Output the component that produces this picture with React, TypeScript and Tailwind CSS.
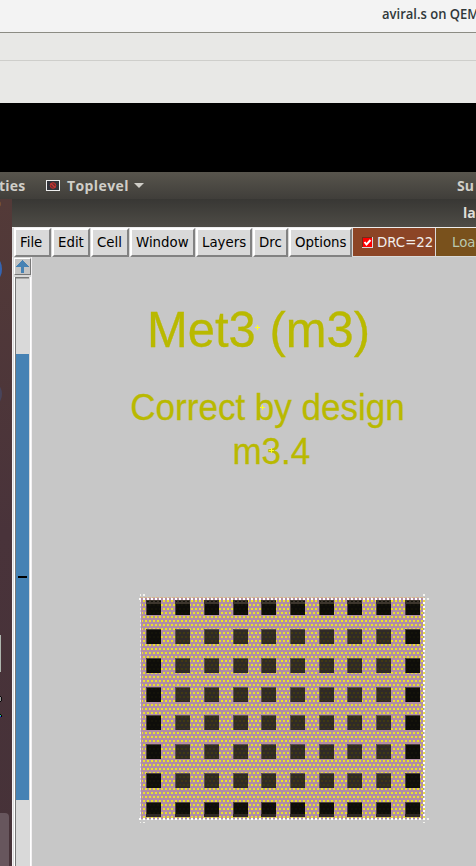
import React from "react";

const COLS = [146, 175, 204, 233, 261, 290, 319, 347, 376, 405];
const ROWS = [600, 629, 658, 687, 715, 744, 773, 802];

function Via({ x, y, edge, first, last }: { x: number; y: number; edge: boolean; first: boolean; last: boolean }) {
  return (
    <g>
      <rect x={x} y={y} width={15} height={15} fill={edge ? "#4d423f" : "#5e5250"} />
      <rect x={x + 1} y={y + 1} width={14} height={14} fill={edge ? "#0e0d0a" : "#302a27"} />
      {first && <rect x={x} y={y} width={15} height={4} fill="#3c352d" />}
      {last && <rect x={x} y={y + 12} width={15} height={3} fill="#2f2925" />}
      <rect x={x + 1} y={y + 1} width={14} height={13} fill={edge ? "url(#dimDots)" : "url(#midDots)"} />
    </g>
  );
}

function Layout() {
  return (
    <svg className="block" width="444" height="609" viewBox="32 257 444 609" shapeRendering="crispEdges">
      <defs>
        <pattern id="dots" width="4" height="8" patternUnits="userSpaceOnUse">
          <rect x="1" y="4" width="2" height="2" fill="#e9e22c" />
          <rect x="3" y="0" width="1" height="2" fill="#e9e22c" />
          <rect x="0" y="0" width="1" height="2" fill="#e9e22c" />
        </pattern>
        <pattern id="midDots" width="4" height="8" patternUnits="userSpaceOnUse">
          <rect x="1" y="4" width="2" height="2" fill="#403b12" />
          <rect x="3" y="0" width="1" height="2" fill="#403b12" />
          <rect x="0" y="0" width="1" height="2" fill="#403b12" />
        </pattern>
        <pattern id="dimDots" width="4" height="8" patternUnits="userSpaceOnUse">
          <rect x="1" y="4" width="2" height="2" fill="#14130a" />
          <rect x="3" y="0" width="1" height="2" fill="#14130a" />
          <rect x="0" y="0" width="1" height="2" fill="#14130a" />
        </pattern>
      </defs>
      <g fill="#b9b900" stroke="#b9b900" strokeWidth="0.3" fontFamily="'Liberation Sans', Arial, sans-serif">
        <text x="147" y="346.5" fontSize="50.5" textLength="223" lengthAdjust="spacingAndGlyphs">Met3 (m3)</text>
        <text x="130.3" y="420.3" fontSize="36.5" textLength="274.5" lengthAdjust="spacingAndGlyphs">Correct by design</text>
        <text x="232.4" y="464.3" fontSize="36.3" textLength="78" lengthAdjust="spacingAndGlyphs">m3.4</text>
      </g>
      <g stroke="#ffff20" strokeWidth="1">
        <path d="M255 327.5h5M257.5 325v5M260 407.5h5M262.5 405v5M269 450.5h5M271.5 448v5" />
      </g>
      <rect x="141" y="598" width="283" height="221" fill="#b18da5" />
      <rect x="142" y="600" width="282" height="218" fill="url(#dots)" />
      {ROWS.map((y, r) =>
        COLS.map((x, c) => (
          <Via
            key={`${r}-${c}`}
            x={x}
            y={y}
            edge={r === 0 || r === 7 || c === 0 || c === 9}
            first={r === 0}
            last={r === 7}
          />
        )),
      )}
      <g strokeWidth="1">
        <path d="M140 597.5H425" stroke="#d7b58d" strokeDasharray="3 1" />
        <path d="M139 599H424" stroke="#ffffff" strokeWidth="2" strokeDasharray="2 2" />
        <path d="M140.5 600V818" stroke="#eee5e5" strokeDasharray="2 2" />
        <path d="M139 819H425" stroke="#ffffff" strokeWidth="2" strokeDasharray="2 2" />
        <path d="M424 598V819" stroke="#ffffff" strokeWidth="2" strokeDasharray="2 2" />
        <path d="M424 600V819" stroke="#e9db45" strokeWidth="2" strokeDasharray="2 6" />
        <path d="M140 595h1M143 595h2M423 595h2M427 599h2M427 819h2" stroke="#f3f3ee" strokeWidth="2" />
        <path d="M140 822.5h1M143 822.5h2M423 822.5h2" stroke="#f3f3ee" />
      </g>
    </svg>
  );
}

function MenuButton({ label, className }: { label: string; className: string }) {
  return (
    <div
      className={`h-[29px] shrink-0 border-2 border-t-white border-l-white border-r-[#828282] border-b-[#828282] bg-[#d9d9d9] text-[13.33px] leading-[25px] whitespace-nowrap text-black ${className}`}
    >
      {label}
    </div>
  );
}

function TitleBar() {
  return (
    <div className="flex h-[103px] flex-col bg-[#e8e8e6]">
      <div className="h-[33px] overflow-hidden border-b border-[#8c8c84] bg-[#f3f3f3] pl-[382px] font-['Open_Sans',sans-serif] text-[14px] leading-[28px] font-semibold whitespace-nowrap text-[#30383a]">
        <span className="inline-block origin-left scale-x-[0.93]">aviral.s on QEM</span>
      </div>
      <div className="h-[28px] border-b border-[#cececb]" />
    </div>
  );
}

function TopPanel() {
  return (
    <div className="flex h-[27px] shrink-0 items-center overflow-hidden bg-linear-to-b from-[#58554d] to-[#403e3a] font-['Open_Sans',sans-serif] text-[14px] font-bold whitespace-nowrap text-[#d0cec8]">
      <div className="w-[46px] shrink-0">
        <span className="-ml-px tracking-[0.2px]">ties</span>
      </div>
      <svg width="14" height="11" viewBox="0 0 14 11" className="shrink-0">
        <rect x="0.5" y="0.5" width="13" height="10" fill="#32333a" stroke="#eeeeee" />
        <circle cx="7" cy="5.5" r="2.8" fill="#742b2c" stroke="#c42c2c" />
        <path d="M5 3.5l4 4" stroke="#ed4444" />
      </svg>
      <span className="ml-[7px] w-[62px] shrink-0 tracking-[0.4px]">Toplevel</span>
      <svg width="10" height="5" viewBox="0 0 10 5" className="ml-[5px] shrink-0">
        <path d="M0 0h10L5 5z" fill="#d0cec8" />
      </svg>
      <span className="ml-[313px] shrink-0">Su</span>
    </div>
  );
}

function Dock() {
  return (
    <div className="h-full w-[12px] shrink-0 overflow-hidden bg-linear-to-b from-[#533a38] via-[#49333a] to-[#463238]">
      <svg width="12" height="667" viewBox="0 199 12 667" className="block">
        <ellipse cx="-3" cy="269" rx="5" ry="10" fill="#3465b3" />
        <ellipse cx="-3" cy="394" rx="5" ry="9" fill="#48445b" />
        <circle cx="-2" cy="204" r="3" fill="#795034" />
        <rect y="635" width="1" height="37" fill="#aeb6ae" />
        <path d="M0 696h1v1h1v4H1v1H0z" fill="#080808" />
        <path d="M0 697h1v4H0z" fill="#999999" />
        <path d="M0 714h1v1h1v2H0z" fill="#000000" />
        <path d="M0 715h1v1H0z" fill="#27e96b" />
        <path d="M0 716h1v1H0z" fill="#2028ff" />
        <rect x="-9" y="813" width="18" height="60" rx="4" fill="#67565d" />
      </svg>
    </div>
  );
}

function ScrollColumn() {
  return (
    <div className="flex w-[20px] shrink-0 flex-col border-x border-[#f2f0f2] bg-[#d9d9d9] pt-[1px]">
      <div className="ml-[1px] h-[17px] w-[17px] border border-t-white border-l-white border-r-[#777] border-b-[#777] bg-[#c3c3c3]">
        <svg width="15" height="15" viewBox="0 0 15 15" shapeRendering="crispEdges">
          <path d="M7 1h1v1h1v1h1v1h1v1h1v1h1v1h1v1H9v6H6V8H1V7h1V6h1V5h1V4h1V3h1V2h1z" fill="#4682b4" />
        </svg>
      </div>
      <div className="mt-[2px] ml-[1px] flex min-h-0 w-[17px] flex-1 border-r border-l border-white">
        <div className="min-h-0 w-[14px] border-t border-l border-[#777]">
          <div className="h-[76px] border-t border-[#aaa]" />
          <div className="h-[446px] bg-[#4682b4] pt-[222px]">
            <div className="ml-[2px] h-[2px] w-[9px] bg-black" />
          </div>
        </div>
      </div>
    </div>
  );
}

export default function App() {
  return (
    <div className="h-[866px] w-[476px] overflow-hidden bg-black">
      <TitleBar />
      <div className="h-[69px] bg-black" />
      <TopPanel />
      <div className="flex h-[667px]">
        <Dock />
        <div className="flex w-[464px] shrink-0 flex-col bg-[#c7c7c7]">
          <div className="h-[28px] shrink-0 bg-linear-to-b from-[#383734] to-[#4e4c46] pl-[451px] font-['Open_Sans',sans-serif] text-[14px] leading-[27px] font-bold whitespace-nowrap text-[#dfddd7]">
            la
          </div>
          <div className="flex h-[30px] shrink-0 overflow-hidden border-t border-[#eeeeee] bg-[#d9d9d9] pl-[2px] font-['DejaVu_Sans',sans-serif]">
            <MenuButton label="File" className="w-[37px] pl-[4px]" />
            <MenuButton label="Edit" className="ml-[1px] w-[38px] pl-[4px]" />
            <MenuButton label="Cell" className="ml-[1px] w-[38px] pl-[4px]" />
            <MenuButton label="Window" className="ml-[1px] w-[65px] pl-[4px]" />
            <MenuButton label="Layers" className="ml-[1px] w-[56px] pl-[4px]" />
            <MenuButton label="Drc" className="ml-[1px] w-[35px] pl-[4px]" />
            <MenuButton label="Options" className="ml-[1px] w-[63px] pl-[4px]" />
            <div className="ml-[1px] flex h-[28px] w-[82px] shrink-0 items-center bg-[#8c4526] pl-[9px] text-[13.33px] whitespace-nowrap text-[#f2eeeb]">
              <svg width="11" height="11" viewBox="0 0 11 11" className="shrink-0">
                <rect width="11" height="11" fill="#d9d9d9" />
                <rect width="10" height="10" fill="#702d1b" />
                <rect x="1" y="1" width="9" height="9" fill="#ff0000" />
                <path d="M2.5 5l2 2.5L8.5 3" fill="none" stroke="#ffffff" strokeWidth="2" />
              </svg>
              <span className="ml-[4px] pt-[2px]">DRC=22</span>
            </div>
            <div className="ml-[1px] h-[28px] w-[42px] shrink-0 overflow-hidden bg-[#79511c] pl-[16px] text-[13.33px] leading-[29px] whitespace-nowrap text-[#b9c9b0]">
              Load
            </div>
          </div>
          <div className="flex h-[609px]">
            <ScrollColumn />
            <Layout />
          </div>
        </div>
      </div>
    </div>
  );
}
